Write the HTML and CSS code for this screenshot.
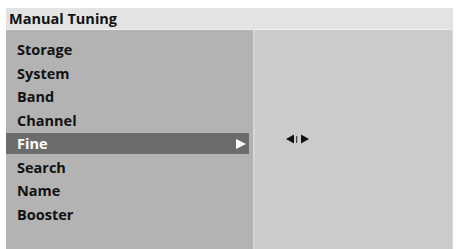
FILE: index.html
```html
<!DOCTYPE html>
<html>
<head>
<meta charset="utf-8">
<link rel="stylesheet" href="styles.css">
</head>
<body>
<div class="screen">
  <div class="title">Manual Tuning</div>
  <div class="main">
    <div class="menu">
      <div class="item">Storage</div>
      <div class="item">System</div>
      <div class="item">Band</div>
      <div class="item">Channel</div>
      <div class="item active">Fine<span class="tri"></span></div>
      <div class="item">Search</div>
      <div class="item">Name</div>
      <div class="item">Booster</div>
    </div>
    <div class="detail">
      <div class="adjust">
        <svg width="26" height="10" viewBox="0 0 26 10">
          <polygon points="0,5 8,0.5 8,9.5" fill="#111"/>
          <rect x="10" y="2" width="1.2" height="7" fill="#444"/>
          <polygon points="23,5 15,0.5 15,9.5" fill="#111"/>
        </svg>
      </div>
    </div>
  </div>
</div>
</body>
</html>
```
FILE: styles.css
```css
html, body {
  margin: 0;
  padding: 0;
  background: #fff;
}
body {
  font-family: "Open Sans", "DejaVu Sans", sans-serif;
  font-weight: 700;
  font-size: 14.5px;
  color: #111;
}
.screen {
  margin: 8px 3px 0 6px;
  width: 447px;
  height: 241px;
  display: flex;
  flex-direction: column;
}
.title {
  height: 22px;
  line-height: 22px;
  background: #e3e3e3;
  padding-left: 3px;
  border-bottom: 1px solid #ededed;
  box-sizing: border-box;
}
.main {
  flex: 1;
  display: flex;
}
.menu {
  width: 247px;
  background: #b3b3b3;
  padding-top: 8px;
  box-sizing: border-box;
}
.item {
  height: 23.5px;
  line-height: 23.5px;
  padding-left: 11px;
  width: 243px;
  box-sizing: border-box;
  display: flex;
  align-items: center;
  justify-content: space-between;
}
.item.active {
  background: #6c6c6c;
  color: #fff;
  padding-right: 3px;
  height: 21px;
  margin: 1px 0 1.5px;
}
.tri {
  width: 0;
  height: 0;
  border-top: 5px solid transparent;
  border-bottom: 5px solid transparent;
  border-left: 10px solid #fff;
}
.detail {
  flex: 1;
  background: #cbcbcb;
  border-left: 2px solid #d6d6d6;
  border-right: 1px solid #d9d9d9;
  padding-top: 104px;
  padding-left: 31px;
}
.adjust svg {
  display: block;
}
```
